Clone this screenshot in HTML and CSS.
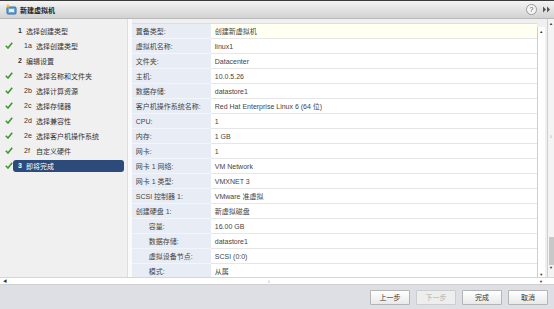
FILE: index.html
```html
<!DOCTYPE html>
<html lang="zh-CN">
<head>
    <meta charset="UTF-8">
    <title>新建虚拟机</title>
    <link rel="stylesheet" href="styles.css">
</head>
<body>

<div class="window">
    <div class="titlebar">
        <svg class="title-icon" width="13" height="13" viewBox="0 0 13 13">
            <rect x="2" y="4" width="9" height="7" rx="1" fill="#6fa6d6" stroke="#2f6aa3" stroke-width="1"/>
            <rect x="4" y="6" width="5" height="3" fill="#dff0fb"/>
            <path d="M3 0.5 L3.8 2.2 L5.5 3 L3.8 3.8 L3 5.5 L2.2 3.8 L0.5 3 L2.2 2.2 Z" fill="#f4c430"/>
        </svg>
        <span class="title">新建虚拟机</span>
        <div class="title-tools">
            <span class="help">?</span>
            <svg width="9" height="9" viewBox="0 0 9 9">
                <path d="M1 1.5 L4 4.5 L1 7.5 Z M5 1.5 L8 4.5 L5 7.5 Z" fill="#555"/>
            </svg>
        </div>
    </div>

    <div class="main">
        <div class="panes">
            <ul class="steps">
                <li class="step"><span class="check"></span><b class="num">1</b>选择创建类型</li>
                <li class="step sub done"><span class="check">
                    <svg width="8" height="7" viewBox="0 0 8 7"><path d="M0.8 3.8 L3 6 L7.2 0.8" fill="none" stroke="#3e9a2e" stroke-width="1.6"/></svg>
                </span><span class="num">1a</span>选择创建类型</li>
                <li class="step"><span class="check"></span><b class="num">2</b>编辑设置</li>
                <li class="step sub done"><span class="check">
                    <svg width="8" height="7" viewBox="0 0 8 7"><path d="M0.8 3.8 L3 6 L7.2 0.8" fill="none" stroke="#3e9a2e" stroke-width="1.6"/></svg>
                </span><span class="num">2a</span>选择名称和文件夹</li>
                <li class="step sub done"><span class="check">
                    <svg width="8" height="7" viewBox="0 0 8 7"><path d="M0.8 3.8 L3 6 L7.2 0.8" fill="none" stroke="#3e9a2e" stroke-width="1.6"/></svg>
                </span><span class="num">2b</span>选择计算资源</li>
                <li class="step sub done"><span class="check">
                    <svg width="8" height="7" viewBox="0 0 8 7"><path d="M0.8 3.8 L3 6 L7.2 0.8" fill="none" stroke="#3e9a2e" stroke-width="1.6"/></svg>
                </span><span class="num">2c</span>选择存储器</li>
                <li class="step sub done"><span class="check">
                    <svg width="8" height="7" viewBox="0 0 8 7"><path d="M0.8 3.8 L3 6 L7.2 0.8" fill="none" stroke="#3e9a2e" stroke-width="1.6"/></svg>
                </span><span class="num">2d</span>选择兼容性</li>
                <li class="step sub done"><span class="check">
                    <svg width="8" height="7" viewBox="0 0 8 7"><path d="M0.8 3.8 L3 6 L7.2 0.8" fill="none" stroke="#3e9a2e" stroke-width="1.6"/></svg>
                </span><span class="num">2e</span>选择客户机操作系统</li>
                <li class="step sub done"><span class="check">
                    <svg width="8" height="7" viewBox="0 0 8 7"><path d="M0.8 3.8 L3 6 L7.2 0.8" fill="none" stroke="#3e9a2e" stroke-width="1.6"/></svg>
                </span><span class="num">2f</span>自定义硬件</li>
                <li class="step done current"><span class="check">
                    <svg width="8" height="7" viewBox="0 0 8 7"><path d="M0.8 3.8 L3 6 L7.2 0.8" fill="none" stroke="#3e9a2e" stroke-width="1.6"/></svg>
                </span><span class="selected"><b class="num">3</b>即将完成</span></li>
            </ul>

            <div class="divider"></div>

            <div class="detail">
                <div class="summary">
                    <div class="label first">置备类型:</div><div class="value first">创建新虚拟机</div>
                    <div class="label">虚拟机名称:</div><div class="value">linux1</div>
                    <div class="label">文件夹:</div><div class="value">Datacenter</div>
                    <div class="label">主机:</div><div class="value">10.0.5.26</div>
                    <div class="label">数据存储:</div><div class="value">datastore1</div>
                    <div class="label">客户机操作系统名称:</div><div class="value">Red Hat Enterprise Linux 6 (64 位)</div>
                    <div class="label">CPU:</div><div class="value">1</div>
                    <div class="label">内存:</div><div class="value">1 GB</div>
                    <div class="label">网卡:</div><div class="value">1</div>
                    <div class="label">网卡 1 网络:</div><div class="value">VM Network</div>
                    <div class="label">网卡 1 类型:</div><div class="value">VMXNET 3</div>
                    <div class="label">SCSI 控制器 1:</div><div class="value">VMware 准虚拟</div>
                    <div class="label">创建硬盘 1:</div><div class="value">新虚拟磁盘</div>
                    <div class="label indent">容量:</div><div class="value">16.00 GB</div>
                    <div class="label indent">数据存储:</div><div class="value">datastore1</div>
                    <div class="label indent">虚拟设备节点:</div><div class="value">SCSI (0:0)</div>
                    <div class="label indent">模式:</div><div class="value">从属</div>
                </div>
                <div class="vscroll inner">
                    <span class="arrow">▲</span>
                    <span class="arrow">▼</span>
                </div>
            </div>

            <div class="vscroll outer">
                <span class="arrow">▲</span>
                <span class="grip">⁞⁞</span>
                <span class="thumb"></span>
                <span class="arrow">▼</span>
            </div>
        </div>

        <div class="hscroll">
            <span class="arrow">◀</span>
            <span class="grip">⁞⁞</span>
            <span class="arrow">▼</span>
        </div>
    </div>

    <div class="footer">
        <button>上一步</button>
        <button disabled>下一步</button>
        <button>完成</button>
        <button>取消</button>
    </div>
</div>

</body>
</html>
```

FILE: styles.css
```css
body {
    margin: 0;
    font-family: "Liberation Sans", "Noto Sans CJK SC", sans-serif;
    font-size: 7px;
    color: #333;
    background: #f0f0f0;
}
.window {
    width: 554px;
    height: 309px;
    display: flex;
    flex-direction: column;
    overflow: hidden;
}
.titlebar {
    height: 17px;
    border-top: 1px solid #3b3b3b;
    border-bottom: 1px solid #b9b9b9;
    background: linear-gradient(#f4f4f4, #d2d2d2);
    display: flex;
    align-items: center;
    padding: 0 3px 0 5px;
}
.title-icon {
    margin-right: 2px;
}
.title {
    font-weight: bold;
    color: #222;
}
.title-tools {
    margin-left: auto;
    display: flex;
    align-items: center;
    gap: 5px;
}
.help {
    width: 9px;
    height: 9px;
    border-radius: 50%;
    border: 1px solid #9a9a9a;
    background: #f6f6f6;
    color: #555;
    font-size: 7px;
    line-height: 9px;
    text-align: center;
}
.main {
    height: 266px;
    display: flex;
    flex-direction: column;
}
.panes {
    flex: 1;
    display: flex;
    min-height: 0;
}
.steps {
    list-style: none;
    margin: 0;
    padding: 4px 0 0 0;
    width: 127px;
    background: #f0f0f0;
}
.step {
    height: 15px;
    display: flex;
    align-items: center;
    padding-left: 5px;
    white-space: nowrap;
}
.step .check {
    width: 13px;
    display: flex;
    align-items: center;
}
.step .num {
    width: 8px;
    font-weight: bold;
}
.step.sub .num {
    width: 12px;
    margin-left: 6px;
    font-weight: normal;
}
.step.current .check {
    width: 8px;
}
.selected {
    display: flex;
    align-items: center;
    width: 106px;
    height: 12px;
    padding-left: 5px;
    background: #2c4a7a;
    border-radius: 3px;
    color: #fff;
}
.divider {
    width: 4px;
    background: #fafafa;
    border-left: 1px solid #dedede;
}
.detail {
    display: flex;
    padding-top: 4px;
    width: 414px;
}
.summary {
    display: grid;
    grid-template-columns: 79px 326px;
    grid-auto-rows: 15px;
    align-content: start;
    border-top: 1px solid #dcdcdc;
    background: #fff;
}
.label, .value {
    display: flex;
    align-items: center;
    white-space: nowrap;
    border-bottom: 1px solid #e6e6e6;
}
.label {
    background: #e8edf5;
    border-bottom-color: #f2f5fa;
    padding-left: 4px;
    color: #444;
}
.label.indent {
    padding-left: 17px;
}
.value {
    padding-left: 4px;
    color: #444;
}
.value.first {
    background: #fffff2;
}
.vscroll {
    display: flex;
    flex-direction: column;
    align-items: center;
    background: #fff;
    border-left: 1px solid #cfcfcf;
    font-size: 4px;
    color: #333;
}
.vscroll.inner {
    width: 8px;
    height: 252px;
    margin-top: 4px;
    justify-content: space-between;
    padding: 2px 0;
    box-sizing: border-box;
}
.vscroll.outer {
    width: 6px;
    margin-left: 2px;
    background: #f4f4f4;
    padding-top: 2px;
}
.vscroll .grip {
    margin-top: 108px;
    color: #888;
}
.vscroll .thumb {
    width: 5px;
    height: 28px;
    margin-top: 98px;
    background: #c8c8c8;
}
.hscroll {
    height: 6px;
    display: flex;
    align-items: center;
    background: #fff;
    border-top: 1px solid #d6d6d6;
    border-bottom: 1px solid #d0d0d0;
    font-size: 4px;
    padding: 0 11px 0 3px;
    color: #333;
}
.hscroll .grip {
    margin-left: 261px;
    color: #888;
}
.hscroll .arrow:last-child {
    margin-left: auto;
}
.footer {
    flex: 1;
    background: #dedfe4;
    display: flex;
    justify-content: flex-end;
    align-items: center;
    gap: 6px;
    padding-right: 6px;
}
.footer button {
    width: 40px;
    height: 15px;
    padding: 0;
    font-family: inherit;
    font-size: 7px;
    color: #333;
    background: linear-gradient(#ffffff, #e9e9e9);
    border: 1px solid #b5b5b5;
    border-radius: 1px;
}
.footer button:disabled {
    color: #b0b0b0;
    border-color: #cdcdcd;
    background: #eeeeee;
}
```
